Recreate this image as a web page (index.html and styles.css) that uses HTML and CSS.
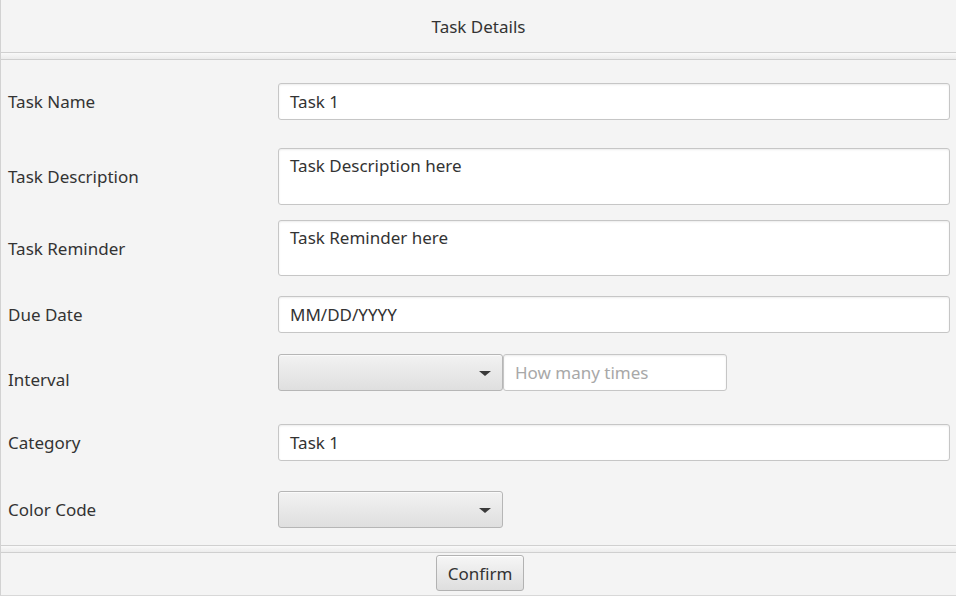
FILE: index.html
```html
<!DOCTYPE html>
<html>
<head>
<meta charset="utf-8">
<link rel="stylesheet" href="styles.css">
</head>
<body>
<div class="app">
  <header class="header">Task Details</header>
  <div class="divider"></div>
  <main class="form">
    <div class="row r1">
      <label class="lbl">Task Name</label>
      <div class="field">Task 1</div>
    </div>
    <div class="row r2">
      <label class="lbl">Task Description</label>
      <div class="field area">Task Description here</div>
    </div>
    <div class="row r3">
      <label class="lbl">Task Reminder</label>
      <div class="field area">Task Reminder here</div>
    </div>
    <div class="row r4">
      <label class="lbl">Due Date</label>
      <div class="field">MM/DD/YYYY</div>
    </div>
    <div class="row r5">
      <label class="lbl lbl-low">Interval</label>
      <div class="combo"><span class="arrow"></span></div>
      <div class="field small placeholder">How many times</div>
    </div>
    <div class="row r6">
      <label class="lbl">Category</label>
      <div class="field">Task 1</div>
    </div>
    <div class="row r7">
      <label class="lbl">Color Code</label>
      <div class="combo"><span class="arrow"></span></div>
    </div>
  </main>
  <div class="divider"></div>
  <footer class="footer">
    <button class="btn">Confirm</button>
  </footer>
</div>
</body>
</html>
```

FILE: styles.css
```css
html, body {
  margin: 0;
  padding: 0;
  background: #f4f4f4;
}
body {
  width: 956px;
  height: 596px;
  overflow: hidden;
  font-family: "Noto Sans", "Open Sans", sans-serif;
  color: #333333;
}
.app {
  width: 956px;
  height: 596px;
  display: flex;
  flex-direction: column;
  box-sizing: border-box;
  border-left: 1px solid #d2d2d2;
  border-bottom: 1px solid #d8d8d8;
}
.header {
  height: 52px;
  display: flex;
  align-items: center;
  justify-content: center;
  font-size: 17px;
  flex: none;
}
.divider {
  flex: none;
  height: 6px;
  border-top: 1px solid #d0d0d0;
  border-bottom: 1px solid #cfcfcf;
  background: linear-gradient(#f9f9f9, #ececec);
}
.form {
  flex: none;
  height: 485px;
  box-sizing: border-box;
  display: flex;
  flex-direction: column;
  padding-right: 6px;
}
.row {
  display: flex;
  align-items: center;
}
.r1 { margin-top: 23px; }
.r2 { margin-top: 28px; }
.r3 { margin-top: 15px; }
.r4 { margin-top: 20px; }
.r5 { margin-top: 21px; }
.r6 { margin-top: 33px; }
.r7 { margin-top: 30px; }
.lbl {
  width: 270px;
  padding-left: 7px;
  flex: none;
  font-size: 17px;
  color: #333;
}
.lbl-low {
  padding-top: 14px;
}
.field {
  flex: 1;
  height: 37px;
  box-sizing: border-box;
  background: #ffffff;
  border: 1px solid #c6c6c6;
  border-radius: 3px;
  box-shadow: inset 0 1px 2px rgba(0,0,0,0.08);
  padding: 0 11px;
  display: flex;
  align-items: center;
  font-size: 17px;
  color: #333;
}
.field.area {
  height: 57px;
  align-items: flex-start;
  padding-top: 5px;
}
.r3 .field.area { height: 56px; }
.field.small {
  flex: none;
  width: 224px;
}
.placeholder { color: #a8a8a8; }
.combo {
  flex: none;
  width: 225px;
  height: 37px;
  box-sizing: border-box;
  border: 1px solid #b6b6b6;
  border-radius: 3px;
  background: linear-gradient(#f2f2f2, #dfdfdf);
  box-shadow: inset 0 1px 0 #fafafa;
  position: relative;
}
.arrow {
  position: absolute;
  right: 11px;
  top: 16px;
  width: 0;
  height: 0;
  border-left: 6px solid transparent;
  border-right: 6px solid transparent;
  border-top: 5px solid #3a3a3a;
}
.footer {
  flex: 1;
  display: flex;
  justify-content: center;
  align-items: flex-start;
  padding-top: 2px;
}
.btn {
  width: 88px;
  height: 36px;
  font-family: "Noto Sans", "Open Sans", sans-serif;
  font-size: 17px;
  color: #333;
  border: 1px solid #b2b2b2;
  border-radius: 3px;
  background: linear-gradient(#f6f6f6, #dedede);
  box-shadow: inset 0 1px 0 #ffffff;
  padding: 0;
  margin-left: 3px;
}
```
